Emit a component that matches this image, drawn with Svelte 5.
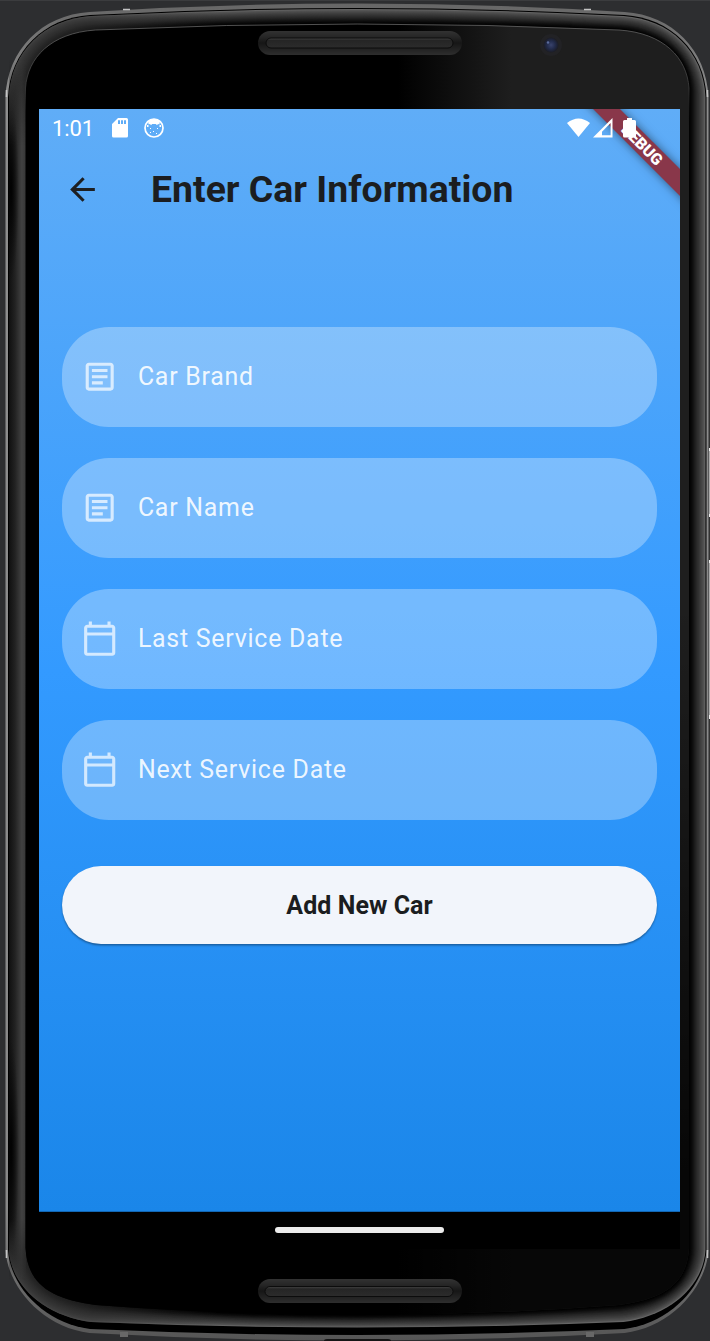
<script>
  const fields = [
    { label: 'Car Brand', icon: 'article' },
    { label: 'Car Name', icon: 'article' },
    { label: 'Last Service Date', icon: 'calendar' },
    { label: 'Next Service Date', icon: 'calendar' }
  ];

  // Each contour: left, right, corner start/end heights, shoulder inset and heights, crown controls.
  const edge = { l: 5.5, r: 708.5, yt: 97, x1: 2, y1: 47, x2: 36, y2: 3, sx: 84, st: 12, ct: -5, yb: 1250, sb: 1333, cb: 1348 };
  const groove = { ...edge, l: 8, r: 706.5, y1: 46, sx: 82, st: 15, ct: 1, sb: 1329, cb: 1341 };
  const outer = { ...edge, l: 9, r: 705.5, y1: 46, sx: 82, st: 16, ct: 2, sb: 1322, cb: 1333 };
  const inner = { l: 25.5, r: 689, yt: 88, x1: 2, y1: 30, x2: 25, y2: 3, sx: 70, st: 30, ct: 18, yb: 1248, sb: 1305, cb: 1325 };

  function mix(a, b, t) {
    return Object.fromEntries(Object.keys(a).map((k) => [k, a[k] + (b[k] - a[k]) * t]));
  }
  function contour(p) {
    const { l, r, yt, x1, y1, x2, y2, sx, st, ct, yb, sb, cb } = p;
    return `M${l} ${yt}C${l + x1} ${yt - y1} ${l + x2} ${st + y2} ${l + sx} ${st}Q357 ${ct} ${r - sx} ${st}` +
      `C${r - x2} ${st + y2} ${r - x1} ${yt - y1} ${r} ${yt}V${yb}` +
      `C${r - x1} ${yb + 36} ${r - x2} ${sb - 6} ${r - sx} ${sb}Q357 ${cb} ${l + sx} ${sb}` +
      `C${l + x2} ${sb - 6} ${l + x1} ${yb + 36} ${l} ${yb}Z`;
  }
  const rim = [100, 84, 76, 69, 62, 56, 50, 44, 38, 31, 24, 17, 11, 6, 2].map((v, i, all) => ({
    d: contour(mix(outer, inner, i / all.length)),
    fill: `rgb(${v},${v},${v})`
  }));
</script>

<div class="device">
  <svg class="frame" width="710" height="1341" viewBox="0 0 710 1341" aria-hidden="true">
    <defs>
      <linearGradient id="side">
        <stop offset="0" stop-color="#101010" />
        <stop offset=".35" stop-color="#222" />
        <stop offset=".75" stop-color="#414141" />
        <stop offset="1" stop-color="#363636" />
      </linearGradient>
      <linearGradient id="fade" x2="0" y2="1">
        <stop offset="0" stop-color="#fff" stop-opacity="0" />
        <stop offset=".07" stop-color="#fff" />
        <stop offset=".95" stop-color="#fff" />
        <stop offset="1" stop-color="#fff" stop-opacity="0" />
      </linearGradient>
      <mask id="sideMask"><rect x="8" y="60" width="19" height="1220" fill="url(#fade)" /></mask>
      <linearGradient id="fill">
        <stop offset="0" stop-color="#303030" stop-opacity=".75" />
        <stop offset=".1" stop-color="#303030" stop-opacity=".6" />
        <stop offset=".3" stop-color="#303030" stop-opacity="0" />
      </linearGradient>
      <radialGradient id="dark">
        <stop offset="0" stop-color="#000" stop-opacity=".95" />
        <stop offset="1" stop-color="#000" stop-opacity="0" />
      </radialGradient>
      <linearGradient id="glare">
        <stop offset=".56" stop-color="#1e1e1e" stop-opacity="0" />
        <stop offset=".72" stop-color="#1e1e1e" />
      </linearGradient>
      <linearGradient id="down" x2="0" y2="1">
        <stop offset=".45" stop-color="#000" stop-opacity="0" />
        <stop offset=".88" stop-color="#000" stop-opacity=".78" />
      </linearGradient>
      <linearGradient id="metal" x2="0" y2="1">
        <stop offset="0" stop-color="#666" />
        <stop offset=".07" stop-color="#8e8e8e" />
        <stop offset=".9" stop-color="#888" />
        <stop offset="1" stop-color="#555" />
      </linearGradient>
      <linearGradient id="hair" x2="0" y2="1">
        <stop offset="0" stop-color="#666" />
        <stop offset=".05" stop-color="#3c3c3c" />
        <stop offset=".08" stop-color="#000" stop-opacity="0" />
        <stop offset="1" stop-color="#000" stop-opacity="0" />
      </linearGradient>
      <linearGradient id="bar" x2="0" y2="1">
        <stop offset="0" stop-color="#323232" />
        <stop offset=".25" stop-color="#262626" />
        <stop offset=".5" stop-color="#161616" />
        <stop offset="1" stop-color="#2e2e2e" />
      </linearGradient>
      <linearGradient id="barIn" x2="0" y2="1">
        <stop offset="0" stop-color="#444" />
        <stop offset=".25" stop-color="#252525" />
        <stop offset="1" stop-color="#2c2c2c" />
      </linearGradient>
      <radialGradient id="lens">
        <stop offset="0" stop-color="#39436c" />
        <stop offset=".55" stop-color="#222b4b" />
        <stop offset="1" stop-color="#1b1c24" />
      </radialGradient>
      <clipPath id="glass"><path d={contour(inner)} /></clipPath>
    </defs>
    <rect width="710" height="1341" fill="#2d2e30" />
    <rect width="710" height="1" fill="#3b3c3e" />
    <path d={contour(edge)} fill="url(#metal)" />
    <path d={contour(groove)} fill="#000" />
    {#each rim as ring}
      <path d={ring.d} fill={ring.fill} />
    {/each}
    <path d={contour(outer)} fill="url(#fill)" />
    <g mask="url(#sideMask)">
      <rect x="9" y="60" width="17" height="1220" fill="url(#side)" />
      <ellipse cx="11" cy="190" rx="8" ry="90" fill="url(#dark)" />
      <ellipse cx="11" cy="1150" rx="8" ry="110" fill="url(#dark)" />
    </g>
    <path d={contour(inner)} fill="#000" />
    <g clip-path="url(#glass)">
      <rect width="710" height="1341" fill="url(#glare)" />
      <rect width="710" height="1341" fill="url(#down)" />
    </g>
    <path d={contour(inner)} fill="none" stroke="url(#hair)" stroke-width=".8" />
    <path d="M123 9.5h7M584 9.5h7M6.5 90v7M707.5 90v7M6.5 1250v8M707.5 1250v8" stroke="#c4c4c4" stroke-width="1.6" />
    <path d="M120 1334.5h8M586 1334.5h8" stroke="#686868" stroke-width="5" />
    <path d="M709.5 400v48M709.5 518v42M709.5 720v40" stroke="#333" />
    <path d="M709.5 450v66M709.5 562v154" stroke="#aaa" />
    <path d="M709 448h1v3h-1zM709 514h1v3h-1zM709 560h1v3h-1zM709 715h1v4h-1z" fill="#eee" />
    <rect x="258" y="31" width="204" height="24" rx="12" fill="url(#bar)" />
    <rect x="266" y="38" width="187" height="10" rx="5" fill="url(#barIn)" stroke="#0c0c0c" />
    <rect x="258" y="1279" width="204" height="24" rx="12" fill="url(#bar)" />
    <rect x="265" y="1286.5" width="188" height="10" rx="5" fill="url(#barIn)" stroke="#0c0c0c" />
    <circle cx="551" cy="45" r="11" fill="#222225" />
    <circle cx="551" cy="45" r="7.5" fill="url(#lens)" />
    <circle cx="548" cy="42.5" r="1.2" fill="#5a6b9c" />
    <path d="M324 1341q0-2 3-2h61q3 0 3 2" fill="#151515" />
  </svg>

  <main class="screen">
    <div class="banner-clip"><div class="banner">DEBUG</div></div>
    <div class="status">
      <span class="clock">1:01</span>
      <svg class="sd" width="16" height="20" viewBox="0 0 16 20"><path fill-rule="evenodd" d="M6 0h8.500q1.500 0 1.500 1.500v16.500q0 1.500-1.500 1.500h-13Q0 19.500 0 18V6zM6 2.200v3.800h2V2.200zm3 0v3.800h2V2.200zm3 0v3.800h2V2.200z" fill="#fff" /></svg>
      <svg class="face" width="20" height="20" viewBox="0 0 20 20">
        <circle cx="10" cy="10" r="9" fill="none" stroke="#fff" stroke-width="1.700" />
        <path d="M4 3Q10-1 16 3l-.6 3.400-1.400-.3-1 1.100-1.200-1.200H8.200L7 7.200 6 6.100l-1.400.3z" fill="#fff" />
        <path d="M3 7h1.500v2H3zm12.500 0H17v2h-1.500zM6 10h1v1H6zm7 0h1v1h-1zm-4 3h1v1H9zm3 2h1v1h-1zm-6-1h1v1H6z" fill="#fff" />
      </svg>
      <span class="spacer"></span>
      <svg class="wifi" width="23" height="20" viewBox="0 0 24 20"><path d="M0 4.800Q12-4.800 24 4.800L12 19.500z" fill="#fff" /></svg>
      <svg class="cell" width="20" height="20" viewBox="0 0 20 20"><path fill-rule="evenodd" d="M19.500 0v19.500H0zM17.600 5L9 13.700v3.600h8.600z" fill="#fff" /></svg>
      <svg class="battery" width="13" height="20" viewBox="0 0 13 20"><path d="M4 0h5v2h2.500q1.500 0 1.500 1.500V18q0 1.500-1.500 1.500h-10Q0 19.500 0 18V3.500Q0 2 1.500 2H4z" fill="#fff" /></svg>
    </div>
    <header>
      <svg width="37" height="37" viewBox="0 0 24 24"><path d="M20 11H7.830l5.590-5.590L12 4l-8 8 8 8 1.410-1.410L7.830 13H20z" fill="#1d1f22" /></svg>
      <h1>Enter Car Information</h1>
    </header>
    <form>
      {#each fields as f}
        <div class="field">
          <svg width="37.400" height="37.400" viewBox="0 0 24 24" fill="#fff" fill-opacity=".7">
            {#if f.icon === 'article'}
              <path d="M19 5v14H5V5h14m0-2H5c-1.100 0-2 .9-2 2v14c0 1.100.9 2 2 2h14c1.100 0 2-.9 2-2V5c0-1.100-.9-2-2-2zM14 17H7v-2h7v2zm3-4H7v-2h10v2zm0-4H7V7h10v2z" />
            {:else}
              <path d="M20 3h-1V1h-2v2H7V1H5v2H4c-1.100 0-2 .9-2 2v16c0 1.100.9 2 2 2h16c1.100 0 2-.9 2-2V5c0-1.100-.9-2-2-2zm0 18H4V10h16v11zm0-13H4V5h16v3z" />
            {/if}
          </svg>
          <span>{f.label}</span>
        </div>
      {/each}
      <button type="button">Add New Car</button>
    </form>
  </main>
  <div class="nav"><i></i></div>
</div>

<style>
  :global(body) { background: #2d2e30; }
  .device {
    position: relative;
    box-sizing: border-box;
    width: 710px;
    height: 1341px;
    padding: 109px 30px 0 39px;
    overflow: hidden;
    font-family: Roboto, sans-serif;
  }
  .frame { position: absolute; left: 0; top: 0; }
  svg { display: block; flex: none; }
  .screen {
    position: relative;
    height: 1103px;
    background: linear-gradient(#60adf7 0%, #339aff 51%, #1a86e9 100%);
    box-shadow: inset 0 -1px #1267b4;
  }
  .status {
    position: relative;
    display: flex;
    align-items: center;
    height: 37px;
    padding: 0 44px 0 13px;
    color: #fff;
    font-size: 22px;
  }
  .clock { width: 60px; line-height: 37px; padding-top: 2px; letter-spacing: -.1px; }
  .face { margin-left: 16px; }
  .spacer { flex: 1; }
  .cell { margin-left: 3px; }
  .battery { margin-left: 10px; }
  .banner-clip { position: absolute; inset: 0; overflow: hidden; }
  .banner {
    position: absolute;
    left: 523px;
    top: 26px;
    width: 160px;
    height: 19px;
    transform: rotate(45deg);
    background: #89374a;
    box-shadow: 0 0 10px rgba(0, 0, 0, .5);
    color: #fff;
    text-align: center;
    font-size: 15.900px;
    line-height: 19px;
    font-weight: 900;
  }
  header {
    position: relative;
    display: flex;
    align-items: center;
    height: 87px;
    padding-left: 25px;
  }
  h1 {
    margin: -1px 0 0 50px;
    color: #1b1d20;
    font-size: 37.400px;
    font-weight: 700;
    line-height: 44px;
    white-space: nowrap;
  }
  form {
    position: relative;
    display: flex;
    flex-direction: column;
    gap: 31px;
    padding: 94px 23px 0;
  }
  .field {
    display: flex;
    align-items: center;
    height: 100px;
    box-sizing: border-box;
    padding-left: 19px;
    border-radius: 47px;
    background: rgba(255, 255, 255, .3);
    color: rgba(255, 255, 255, .9);
  }
  .field span { margin-left: 19.500px; font-size: 24.900px; letter-spacing: .76px; line-height: 30px; }
  button {
    height: 78px;
    margin-top: 15px;
    padding: 2px 0 0;
    border: 0;
    border-radius: 39px;
    background: #f2f5fb;
    box-shadow: 0 1.500px 2px rgba(0, 0, 0, .35);
    color: #1b1d20;
    font: 700 25px/76px Roboto, sans-serif;
    letter-spacing: .06px;
  }
  .nav {
    position: relative;
    display: flex;
    justify-content: center;
    height: 37px;
    background: #000;
  }
  .nav i { width: 169px; height: 6px; margin-top: 15px; border-radius: 3px; background: #ececec; }
</style>
